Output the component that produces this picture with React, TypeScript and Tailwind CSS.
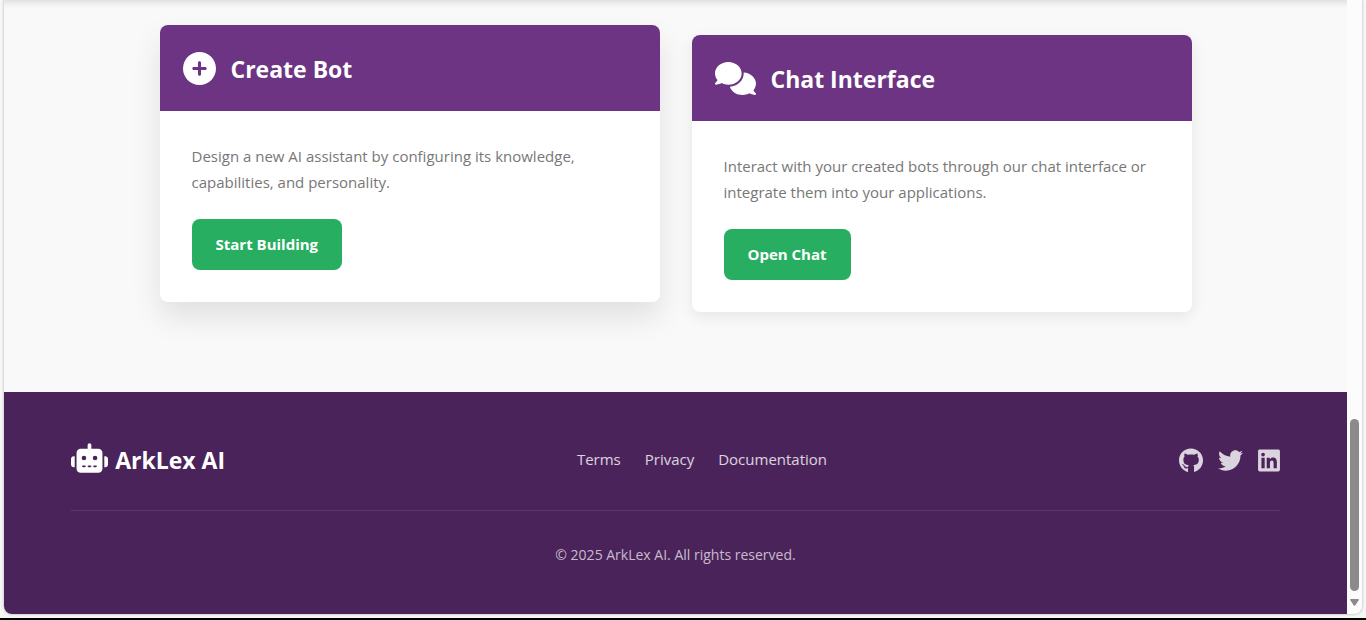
import type { ReactNode } from "react";
import { FaCirclePlus, FaComments, FaGithub, FaLinkedin, FaRobot, FaTwitter } from "react-icons/fa6";

type CardProps = {
  icon: ReactNode;
  title: string;
  text: string;
  action: string;
  raised?: boolean;
};

function FeatureCard({ icon, title, text, action, raised }: CardProps) {
  return (
    <article
      className={
        "flex-1 overflow-hidden rounded-lg bg-white " +
        (raised
          ? "-translate-y-2.5 shadow-[0_15px_30px_rgba(0,0,0,0.1)]"
          : "shadow-[0_5px_15px_rgba(0,0,0,0.08)]")
      }
    >
      <header className="flex h-[86px] items-center gap-[15px] bg-[#6c3483] px-[23px] text-white">
        {icon}
        <h3 className="pt-0.5 text-[23px] leading-8 font-bold">{title}</h3>
      </header>
      <div className="p-8">
        <p className="mb-6 text-[15px] leading-[26px] text-[#777777]">{text}</p>
        <button type="button" className="h-[51px] rounded-lg bg-[#27ae60] px-6 text-[15px] font-bold text-white">
          {action}
        </button>
      </div>
    </article>
  );
}

const footerLinks = ["Terms", "Privacy", "Documentation"];

const socials = [
  { name: "GitHub", Icon: FaGithub, size: "h-[25px] w-6" },
  { name: "Twitter", Icon: FaTwitter, size: "h-[25px] w-[25px]" },
  { name: "LinkedIn", Icon: FaLinkedin, size: "h-[25px] w-[22px]" },
];

export default function App() {
  return (
    <div className="flex min-h-screen flex-col border-b-2 border-black bg-[#f7f7f7] px-1 pb-1 font-['Open_Sans','Noto_Sans',sans-serif]">
      <div className="flex flex-1 overflow-hidden rounded-b-lg bg-[#fcfcfc] shadow-[0_0_3px_rgba(0,0,0,0.3)]">
        <div className="flex flex-1 flex-col">
          <main className="flex-1 bg-[#f9f9f9] px-8 pt-[35px] pb-20 shadow-[inset_0_9px_8px_-8px_rgba(0,0,0,0.16)]">
            <div className="mx-auto flex max-w-[1032px] gap-8">
              <FeatureCard
                raised
                icon={<FaCirclePlus className="size-[33px]" />}
                title="Create Bot"
                text="Design a new AI assistant by configuring its knowledge, capabilities, and personality."
                action="Start Building"
              />
              <FeatureCard
                icon={<FaComments className="h-[33px] w-[41px]" />}
                title="Chat Interface"
                text="Interact with your created bots through our chat interface or integrate them into your applications."
                action="Open Chat"
              />
            </div>
          </main>
          <footer className="bg-[#4a235a] py-12">
            <div className="mx-auto w-[90%]">
              <div className="flex h-[38px] items-center justify-between pt-px">
                <div className="flex items-center gap-[7px] pb-1 text-white">
                  <FaRobot className="h-[30px] w-[37px]" />
                  <span className="pt-1 text-[23px] leading-8 font-bold">ArkLex AI</span>
                </div>
                <nav className="flex gap-6 text-[15px] text-white/80">
                  {footerLinks.map((label) => (
                    <a key={label} href="#">{label}</a>
                  ))}
                </nav>
                <div className="flex items-center gap-[15px] pt-0.5 text-white/80">
                  {socials.map(({ name, Icon, size }) => (
                    <a key={name} href="#" aria-label={name}>
                      <Icon className={size} />
                    </a>
                  ))}
                </div>
              </div>
              <p className="mt-8 border-t border-white/10 pt-8 text-center text-sm leading-[23px] text-white/70">
                © 2025 ArkLex AI. All rights reserved.
              </p>
            </div>
          </footer>
        </div>
        <div className="flex w-[15px] flex-col items-center justify-end gap-2 pb-2" aria-hidden="true">
          <div className="h-[172px] w-[9px] rounded-full bg-[#8b8b8b]" />
          <svg className="h-[7px] w-[9px]" viewBox="0 0 9 7" fill="#8b8b8b">
            <path d="M1 0h7a.8.8 0 0 1 .7 1.3L5.2 6.400a.8.8 0 0 1-1.400 0L.3 1.300A.8.8 0 0 1 1 0Z" />
          </svg>
        </div>
      </div>
    </div>
  );
}
